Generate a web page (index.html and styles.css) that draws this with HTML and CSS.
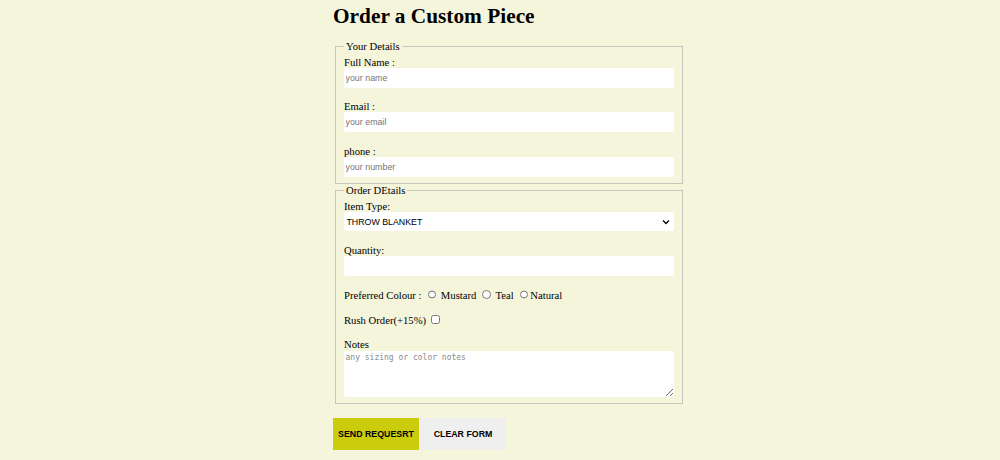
FILE: index.html
```html
<!DOCTYPE html>
<html lang="en">
<head>
<meta charset="utf-8">
<title>Order a Custom Piece</title>
<link rel="stylesheet" href="styles.css">
</head>
<body>
<div class="page">
  <h1 class="title">Order a Custom Piece</h1>
  <form class="order-form">
    <fieldset class="group">
      <legend class="group-title">Your Details</legend>
      <div class="field">
        <label class="field-label" for="name">Full Name :</label>
        <input class="text-input" id="name" type="text" placeholder="your name">
      </div>
      <div class="field">
        <label class="field-label" for="email">Email :</label>
        <input class="text-input" id="email" type="email" placeholder="your email">
      </div>
      <div class="field last">
        <label class="field-label" for="phone">phone :</label>
        <input class="text-input" id="phone" type="tel" placeholder="your number">
      </div>
    </fieldset>
    <fieldset class="group">
      <legend class="group-title">Order DEtails</legend>
      <div class="field">
        <label class="field-label" for="item">Item Type:</label>
        <div class="select-wrap">
          <select class="select-input" id="item">
            <option>THROW BLANKET</option>
            <option>SCARF</option>
            <option>CUSHION COVER</option>
          </select>
          <svg class="select-arrow" width="8" height="6" viewBox="0 0 8 6" aria-hidden="true"><path d="M1 1.5 L4 4.5 L7 1.5" fill="none" stroke="#000" stroke-width="1.3"/></svg>
        </div>
      </div>
      <div class="field">
        <label class="field-label" for="qty">Quantity:</label>
        <input class="text-input" id="qty" type="number">
      </div>
      <div class="row radio-row">Preferred Colour : <input class="radio" type="radio" name="colour"> Mustard <input class="radio" type="radio" name="colour"> Teal <input class="radio" type="radio" name="colour">Natural</div>
      <div class="row check-row">Rush Order(+15%) <input class="check" type="checkbox"></div>
      <div class="field last">
        <label class="field-label notes-label" for="notes">Notes</label>
        <textarea class="notes" id="notes" placeholder="any sizing or color notes"></textarea>
      </div>
    </fieldset>
    <div class="actions">
      <button class="btn btn-send" type="submit">SEND REQUESRT</button>
      <button class="btn btn-clear" type="reset">CLEAR FORM</button>
    </div>
  </form>
</div>
</body>
</html>
```

FILE: styles.css
```css
html, body {
  margin: 0;
  padding: 0;
}

body {
  background: #f5f5dc;
  color: #000;
  font-family: "Liberation Serif", "Times New Roman", serif;
  font-size: 10.67px;
  padding-left: 18px;
}

.page {
  width: 352px;
  margin: 0 auto;
}

.title {
  font-size: 21.33px;
  line-height: 24.5px;
  font-weight: bold;
  margin: 4px 0 11.5px;
}

.order-form {
  margin: 0;
}

.group {
  margin: 0 2px;
  border: 1px solid #c6c6be;
  padding: 3.5px 8px 6.5px;
  min-width: 0;
}

.group-title {
  padding: 0 2px;
  line-height: 12.3px;
}

.field {
  margin-bottom: 12.5px;
}

.field.last {
  margin-bottom: 0;
}

.field-label {
  display: block;
  line-height: 12px;
}

.notes-label {
  margin-top: 1px;
  margin-bottom: 1px;
}

.text-input,
.select-input,
.notes {
  display: block;
  box-sizing: border-box;
  width: 330px;
  border: none;
  border-radius: 2px;
  background: #fff;
  margin: 0;
  outline: none;
}

.text-input {
  height: 20px;
  padding: 1px 1.5px;
  font-family: "Liberation Sans", Arial, sans-serif;
  font-size: 8.9px;
}

.text-input::placeholder {
  color: #767676;
}

.select-wrap {
  position: relative;
  width: 330px;
}

.select-input {
  -webkit-appearance: none;
  appearance: none;
  height: 19px;
  padding: 0 2.5px;
  font-family: "Liberation Sans", Arial, sans-serif;
  font-size: 8.8px;
  color: #000;
}

.select-arrow {
  position: absolute;
  right: 4px;
  top: 7px;
  pointer-events: none;
}

.row {
  line-height: 12px;
  height: 12px;
  margin-bottom: 13px;
  white-space: nowrap;
}

.check-row {
  margin-bottom: 12.3px;
}

.radio-row {
  margin-bottom: 13.3px;
}

.radio {
  width: 8.7px;
  height: 8.7px;
  margin: 2px 2px 0 3.3px;
  vertical-align: baseline;
}

.check {
  width: 8.7px;
  height: 8.7px;
  margin: 2px 2px 2px 2.7px;
  vertical-align: 0px;
}

.notes {
  height: 46px;
  padding: 2px 1.5px;
  font-family: "DejaVu Sans Mono", "Liberation Mono", monospace;
  font-size: 8px;
  resize: vertical;
}

.notes::placeholder {
  color: #8a8a8a;
}

.actions {
  display: flex;
  gap: 1px;
  margin-top: 13.5px;
}

.btn {
  width: 86px;
  height: 32px;
  border: none;
  padding: 0;
  font-family: "Liberation Sans", Arial, sans-serif;
  font-weight: bold;
  font-size: 8.8px;
  color: #000;
}

.btn-send {
  background: #cbcc0c;
}

.btn-clear {
  background: #efefef;
}
```
